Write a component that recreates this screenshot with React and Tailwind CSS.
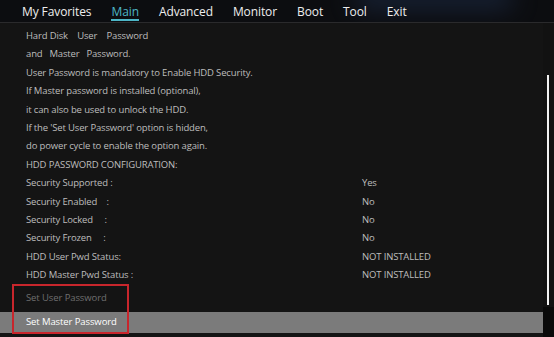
import React from 'react';

const TABS = ['My Favorites', 'Main', 'Advanced', 'Monitor', 'Boot', 'Tool', 'Exit'];

const HELP = [
  'Hard Disk\u00a0\u00a0\u00a0 User\u00a0\u00a0\u00a0 Password',
  'and\u00a0\u00a0 Master\u00a0\u00a0 Password.',
  'User Password is mandatory to Enable HDD Security.',
  'If Master password is installed (optional),',
  'it can also be used to unlock the HDD.',
  "If the 'Set User Password' option is hidden,",
  'do power cycle to enable the option again.',
  'HDD PASSWORD CONFIGURATION:',
];

const STATUS = [
  { label: 'Security Supported :', value: 'Yes' },
  { label: 'Security Enabled\u00a0\u00a0\u00a0 :', value: 'No' },
  { label: 'Security Locked\u00a0\u00a0\u00a0\u00a0 :', value: 'No' },
  { label: 'Security Frozen\u00a0\u00a0\u00a0\u00a0 :', value: 'No' },
  { label: 'HDD User Pwd Status:', value: 'NOT INSTALLED' },
  { label: 'HDD Master Pwd Status :', value: 'NOT INSTALLED' },
];

const App = () => {
  return (
    <div className="w-[554px] h-[337px] overflow-hidden bg-[#141414] text-[#bdbdbd] relative" style={{ fontFamily: '"Open Sans", "Noto Sans", sans-serif' }}>
      {/* Top menu */}
      <div className="h-[23px] bg-[#0c0d10] border-b border-[#2a2a2c] relative overflow-hidden">
        <div className="absolute right-[40px] -top-[14px] w-[160px] h-[24px] rounded-full bg-[#1c2a44] blur-md opacity-70" />
        <div className="relative flex items-start gap-[20px] pl-[22px] pt-[4px] text-[12px] leading-[15px] tracking-[-0.1px]">
          {TABS.map((t) => (
            <span
              key={t}
              className={
                t === 'Main'
                  ? 'text-[#4db6c6] border-b-2 border-[#4db6c6]'
                  : 'text-[#eeeeee]'
              }
            >
              {t}
            </span>
          ))}
        </div>
      </div>

      <div className="flex">
        <div className="flex-1">
          {/* Help and status */}
          <div className="pl-[26px] pt-[4px] text-[9.5px] leading-[18.4px] tracking-[-0.15px]">
            {HELP.map((line, i) => (
              <div key={i} className="whitespace-pre">{line}</div>
            ))}
            {STATUS.map((row) => (
              <div key={row.label} className="grid grid-cols-[336px_1fr]">
                <span className="whitespace-pre">{row.label}</span>
                <span>{row.value}</span>
              </div>
            ))}
          </div>

          {/* Options */}
          <div className="text-[9.5px] tracking-[-0.1px]">
            <div className="h-[27px] flex items-center pl-[26px] text-[#6f6f6f]">Set User Password</div>
            <div className="h-[21px] flex items-center pl-[26px] bg-[#7b7b7b] text-white font-medium">Set Master Password</div>
          </div>
        </div>

        {/* Scrollbar */}
        <div className="w-[11px] h-[314px] relative bg-[#121212]">
          <div className="absolute left-[4px] top-[52px] w-[2px] h-[230px] bg-[#f2f2f2]" />
          <div className="absolute left-0 bottom-0 w-[11px] h-[30px] bg-[#0a0a0a]" />
        </div>
      </div>

      {/* Annotation box */}
      <div className="absolute left-[12px] top-[284px] w-[117px] h-[50px] border-2 border-[#c8262c]" />
    </div>
  );
};

export default App;
